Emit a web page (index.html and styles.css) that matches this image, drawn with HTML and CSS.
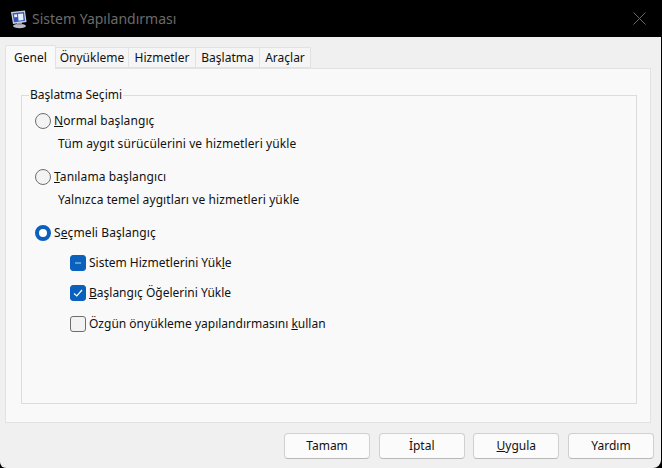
FILE: index.html
```html
<!DOCTYPE html>
<html lang="tr">
<head>
<meta charset="utf-8">
<title>Sistem Yapılandırması</title>
<link rel="stylesheet" href="styles.css">
</head>
<body>
<div class="window">
  <header class="titlebar">
    <svg class="app-icon" width="20" height="20" viewBox="0 0 20 20">
      <ellipse cx="10.500" cy="17" rx="6.500" ry="2.200" fill="#b9bcc4"/>
      <rect x="8" y="13" width="5" height="3" fill="#8d929c"/>
      <path d="M2 3 L16 1.500 L17.500 13 L4 15 Z" fill="#c9ced8"/>
      <path d="M3.500 4.200 L15 3 L16 11.800 L5 13.300 Z" fill="#2f55c4"/>
      <path d="M9 5 L14 4.500 L14.500 11 L9.500 11.700 Z" fill="#e8eefa"/>
      <path d="M5 5.500 L8 5.200 L8.300 8 L5.300 8.300 Z" fill="#e8eefa"/>
    </svg>
    <span class="title">Sistem Yapılandırması</span>
    <svg class="close" width="13" height="13" viewBox="0 0 13 13">
      <path d="M0.500 0.500 L12.500 12.500 M12.500 0.500 L0.500 12.500" stroke="#6a6a6a" stroke-width="1" fill="none"/>
    </svg>
  </header>
  <main class="body">
    <nav class="tabs">
      <span class="tab active">Genel</span>
      <span class="tab">Önyükleme</span>
      <span class="tab">Hizmetler</span>
      <span class="tab">Başlatma</span>
      <span class="tab">Araçlar</span>
    </nav>
    <section class="panel">
      <fieldset class="group">
        <legend>Başlatma Seçimi</legend>
        <div class="option">
          <span class="radio"></span><span><u>N</u>ormal başlangıç</span>
        </div>
        <p class="hint">Tüm aygıt sürücülerini ve hizmetleri yükle</p>
        <div class="option">
          <span class="radio"></span><span><u>T</u>anılama başlangıcı</span>
        </div>
        <p class="hint">Yalnızca temel aygıtları ve hizmetleri yükle</p>
        <div class="option">
          <span class="radio checked"></span><span>S<u>e</u>çmeli Başlangıç</span>
        </div>
        <div class="checks">
          <div class="check-row"><span class="box on"><svg width="10" height="10" viewBox="0 0 10 10"><path d="M2 5 H8" stroke="#7fb0e0" stroke-width="1.400"/></svg></span><span>Sistem Hizmetlerini Yük<u>l</u>e</span></div>
          <div class="check-row"><span class="box on"><svg width="10" height="10" viewBox="0 0 10 10"><path d="M1 5.500 L3.800 8 L9 2" stroke="#fff" stroke-width="1.200" fill="none"/></svg></span><span><u>B</u>aşlangıç Öğelerini Yükle</span></div>
          <div class="check-row"><span class="box"></span><span>Özgün önyükleme yapılandırmasını <u>k</u>ullan</span></div>
        </div>
      </fieldset>
    </section>
    <footer class="actions">
      <button class="btn">Tamam</button>
      <button class="btn">İptal</button>
      <button class="btn"><u>U</u>ygula</button>
      <button class="btn">Yardım</button>
    </footer>
  </main>
</div>
</body>
</html>
```
FILE: styles.css
```css
* { box-sizing: border-box; }
html, body { margin: 0; height: 100%; background: #000; }
body { font: 12px/16px "Noto Sans", "Open Sans", sans-serif; color: #111; overflow: hidden; }
.window { width: 661px; height: 468px; display: flex; flex-direction: column; background: #f0f0f0; border-radius: 0 0 8px 6px; overflow: hidden; }
.titlebar { height: 37px; flex: none; background: #000; display: flex; align-items: center; padding: 0 15px 0 9px; }
.app-icon { flex: none; margin-right: 3px; margin-top: 1px; }
.title { flex: 1; color: #6b6b6b; font-size: 14px; }
.close { flex: none; }
.body { flex: 1; display: flex; flex-direction: column; padding: 8px 10px 9px 5px; }
.tabs { display: grid; grid-template-columns: 51px 73px 67px 64px 51px; height: 23px; align-items: end; position: relative; z-index: 1; }
.tab { height: 21px; display: flex; align-items: center; justify-content: center; background: #f5f5f5; border: 1px solid #e2e2e2; border-left: 0; font-size: 12px; }
.tab.active { height: 24px; margin-bottom: -1px; background: #f9f9f9; border-left: 1px solid #e2e2e2; border-bottom: 0; border-radius: 2px 2px 0 0; }
.panel { height: 355px; flex: none; width: 646px; background: #f9f9f9; border: 1px solid #e2e2e2; padding: 18px 13px 18px 15px; }
.group { margin: 0; height: 317px; border: 1px solid #dcdcdc; padding: 8px 0 0 13px; background: transparent; }
.group legend { padding: 0 1px; margin-left: -6px; line-height: 16px; }
.option { display: flex; align-items: center; height: 20px; gap: 3px; letter-spacing: 0.1px; }
.hint { margin: 3px 0 0; padding-left: 23px; height: 33px; line-height: 20px; letter-spacing: 0.1px; }
.radio { width: 16px; height: 16px; border-radius: 50%; background: #f3f3f3; border: 1px solid #6e6e6e; flex: none; }
.radio.checked { background: #fff; border: 4.500px solid #0a60bd; }
.checks { padding: 12px 0 0 35px; display: flex; flex-direction: column; gap: 14.250px; }
.check-row { display: flex; align-items: center; height: 16px; gap: 3px; }
.box { width: 16px; height: 16px; border-radius: 3px; background: #f3f3f3; border: 1px solid #6e6e6e; flex: none; display: flex; align-items: center; justify-content: center; }
.box.on { background: #0a60bd; border-color: #0a60bd; }
.actions { flex: 1; display: flex; justify-content: flex-end; gap: 8.667px; padding-top: 10px; margin-right: -3px; }
.btn { width: 86px; height: 26px; padding: 0; font: inherit; color: #111; background: #fbfbfb; border: 1px solid #d0d0d0; border-bottom-color: #b8b8b8; border-radius: 4px; }
```
